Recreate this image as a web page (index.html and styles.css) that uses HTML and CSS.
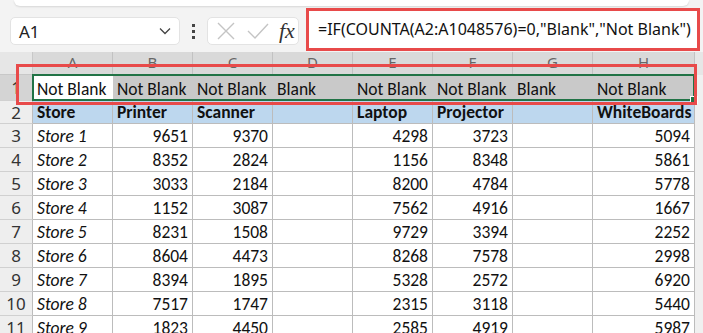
FILE: index.html
```html
<!DOCTYPE html>
<html>

<head>
	<title>COUNTA Blank check</title>
	<link rel="stylesheet" href="styles.css">
</head>

<body>
	<div class="ribbon-edge"></div>

	<!-- Thanh công thức -->
	<div class="formula-bar">
		<div class="name-box">
			<span>A1</span>
			<svg class="chevron" width="12" height="8" viewBox="0 0 12 8"><path d="M1 1.5 L6 6.5 L11 1.5" fill="none" stroke="#444" stroke-width="1.3"/></svg>
		</div>
		<div class="dots"><i></i><i></i><i></i></div>
		<div class="fx-box">
			<svg width="22" height="22" viewBox="0 0 22 22"><path d="M3 3 L19 19 M19 3 L3 19" stroke="#c4c4c4" stroke-width="1.4" fill="none"/></svg>
			<svg width="24" height="22" viewBox="0 0 24 22"><path d="M2 11 L9 18 L22 4" stroke="#c4c4c4" stroke-width="1.4" fill="none"/></svg>
			<span class="fx">fx</span>
		</div>
		<div class="formula-input">=IF(COUNTA(A2:A1048576)=0,"Blank","Not Blank")</div>
	</div>

	<!-- Bảng tính -->
	<div class="sheet">
		<div class="grid" id="grid"></div>
		<div class="selection"><span class="handle"></span></div>
		<div class="mark-row"></div>
	</div>

	<script>
		const cols = ["A", "B", "C", "D", "E", "F", "G", "H"];
		const row1 = ["Not Blank", "Not Blank", "Not Blank", "Blank", "Not Blank", "Not Blank", "Blank", "Not Blank"];
		const heads = ["Store", "Printer", "Scanner", "", "Laptop", "Projector", "", "WhiteBoards"];
		const data = [
			[9651, 9370, 4298, 3723, 5094],
			[8352, 2824, 1156, 8348, 5861],
			[3033, 2184, 8200, 4784, 5778],
			[1152, 3087, 7562, 4916, 1667],
			[8231, 1508, 9729, 3394, 2252],
			[8604, 4473, 8268, 7578, 2998],
			[8394, 1895, 5328, 2572, 6920],
			[7517, 1747, 2315, 3118, 5440],
			[1823, 4450, 2585, 4919, 5987]
		];

		const grid = document.getElementById("grid");

		function cell(cls, text) {
			const div = document.createElement("div");
			div.className = cls;
			div.textContent = text;
			grid.appendChild(div);
		}

		// hàng tiêu đề cột
		cell("corner", "");
		cols.forEach((c) => cell("col-head", c));
		cell("rest head-rest", "");

		// hàng 1
		cell("row-head row-head-sel", "1");
		row1.forEach((t, i) => cell(i === 0 ? "cell active" : "cell sel", t));
		cell("rest", "");

		// hàng 2
		cell("row-head", "2");
		heads.forEach((t) => cell("cell title", t));
		cell("rest", "");

		data.forEach((r, i) => {
			cell("row-head", String(i + 3));
			cell("cell store", "Store " + (i + 1));
			cell("cell num", r[0]);
			cell("cell num", r[1]);
			cell("cell", "");
			cell("cell num", r[2]);
			cell("cell num", r[3]);
			cell("cell", "");
			cell("cell num", r[4]);
			cell("rest", "");
		});
	</script>
</body>

</html>
```

FILE: styles.css
```css
body {
	margin: 0;
	background-color: #f3f3f3;
	font-family: "Noto Sans", "Open Sans", sans-serif;
	overflow: hidden;
}

.ribbon-edge {
	height: 6px;
	margin: 0 14px;
	background-color: #fff;
	border-radius: 0 0 8px 8px;
	box-shadow: 0 1px 2px rgba(0, 0, 0, 0.12);
}

.formula-bar {
	display: flex;
	align-items: center;
	height: 44px;
	padding-left: 10px;
}

.name-box {
	display: flex;
	align-items: center;
	justify-content: space-between;
	box-sizing: border-box;
	width: 170px;
	height: 28px;
	padding: 0 8px 0 8px;
	background-color: #fff;
	border: 1px solid #e3e3e3;
	border-radius: 5px;
	font-size: 17px;
	color: #222;
	margin-top: 6px;
}

.dots {
	display: flex;
	flex-direction: column;
	gap: 3px;
	width: 27px;
	align-items: center;
	margin-top: 6px;
}

.dots i {
	display: block;
	width: 3px;
	height: 3px;
	background-color: #444;
}

.fx-box {
	display: flex;
	align-items: center;
	gap: 9px;
	box-sizing: border-box;
	width: 92px;
	height: 28px;
	padding-left: 7px;
	background-color: #fff;
	border: 1px solid #e3e3e3;
	border-radius: 5px;
	margin-top: 6px;
}

.fx {
	font-family: "Liberation Serif", serif;
	font-style: italic;
	font-size: 22px;
	color: #333;
	line-height: 1;
}

.formula-input {
	box-sizing: border-box;
	height: 43px;
	margin-left: 7px;
	margin-right: 3px;
	flex: 1;
	display: flex;
	align-items: center;
	padding-left: 9px;
	background-color: #fff;
	border: 3px solid #e84a4a;
	font-size: 16px;
	color: #111;
	margin-top: 2px;
}

/* Bảng tính */
.sheet {
	position: relative;
	margin-top: 2px;
}

.grid {
	display: grid;
	grid-template-columns: 33px repeat(7, 80px) 102px 8px;
	grid-template-rows: 23px 26px 23px repeat(9, 24px);
	background-color: #fff;
}

.corner,
.col-head,
.row-head {
	background-color: #e6e6e6;
	color: #555;
	display: flex;
	align-items: center;
	justify-content: center;
}

.corner {
	border-right: 1px solid #c8c8c8;
	border-bottom: 1px solid #c8c8c8;
}

.col-head {
	background-color: #d9d9d9;
	border-right: 1px solid #c2c2c2;
	border-bottom: 1px solid #c2c2c2;
	font-size: 15px;
	color: #666;
	padding-bottom: 3px;
	box-sizing: border-box;
}

.row-head {
	background-color: #eeeeee;
	border-right: 1px solid #bdbdbd;
	border-bottom: 1px solid #d0d0d0;
	font-size: 17px;
	color: #333;
}

.row-head-sel {
	background-color: #d4d4d4;
}

.rest {
	background-color: #f0f0f0;
}

.head-rest {
	background-color: #e6e6e6;
}

.cell {
	font-family: "Carlito", "Lato", sans-serif;
	font-size: 17.5px;
	line-height: 20px;
	color: #111;
	border-right: 1px solid #bcbcbc;
	border-bottom: 1px solid #bcbcbc;
	padding: 0 4px;
	display: flex;
	align-items: flex-end;
	padding-bottom: 1px;
	white-space: nowrap;
	overflow: visible;
}

.cell.sel {
	background-color: #c9c9c9;
	border-right-color: #c9c9c9;
}

.cell.active {
	border-right-color: #fff;
}

.cell.title {
	background-color: #bdd7ee;
	font-weight: bold;
}

.cell.store {
	font-style: italic;
}

.cell.num {
	justify-content: flex-end;
}

.selection {
	position: absolute;
	left: 32px;
	top: 22px;
	width: 659px;
	height: 23px;
	border: 2px solid #217346;
}

.handle {
	position: absolute;
	right: -5px;
	bottom: -5px;
	width: 6px;
	height: 6px;
	background-color: #217346;
	border: 1px solid #fff;
}

.mark-row {
	position: absolute;
	left: 16px;
	top: 12px;
	width: 675px;
	height: 35px;
	border: 3px solid #e84a4a;
}
```
